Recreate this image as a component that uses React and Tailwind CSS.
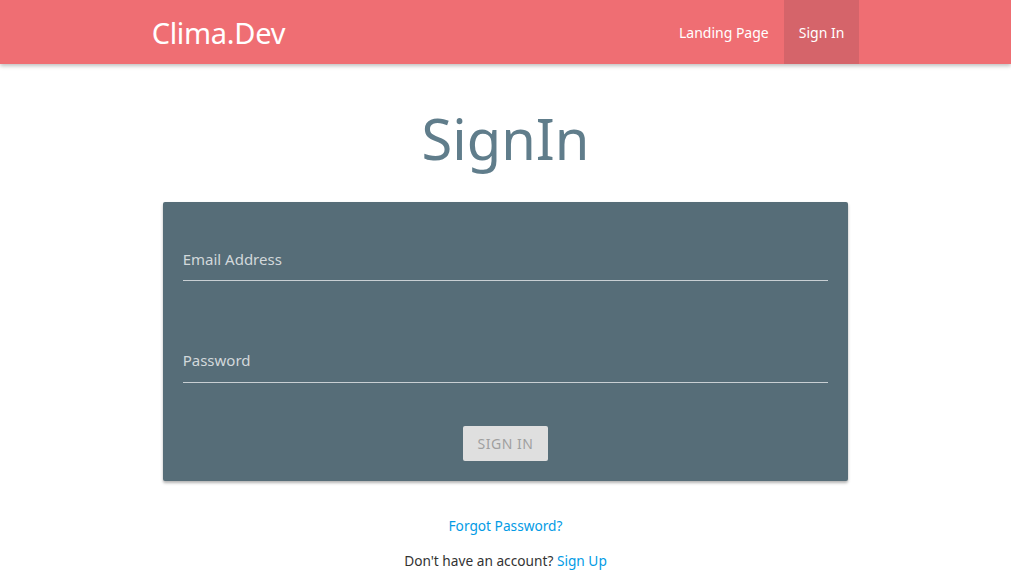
export default function App() {
  return (
    <div className="min-h-screen bg-white" style={{ fontFamily: '"Noto Sans", "Open Sans", sans-serif' }}>
      <nav className="h-16 bg-[#ef6e73] shadow-[0_2px_4px_rgba(0,0,0,0.25)]">
        <div className="mx-auto flex h-full w-[70%] items-center justify-between">
          <a className="text-[29px] leading-none text-white tracking-[-0.3px]">Clima.Dev</a>
          <ul className="flex h-full text-[14px] text-white">
            <li className="flex h-full items-center px-[15px]">Landing Page</li>
            <li className="flex h-full items-center bg-[#d5646a] px-[15px]">Sign In</li>
          </ul>
        </div>
      </nav>

      <main className="mx-auto w-[70%] px-[11px]">
        <h1 className="mt-[34px] text-center text-[56px] leading-[80px] text-[#607d8b]">SignIn</h1>
        <div className="mt-[24px] h-[279px] rounded-[2px] bg-[#566d78] px-[20px] pt-[46px] shadow-[0_2px_3px_rgba(0,0,0,0.3)]">
          <div className="border-b border-[#c8cfd3] pb-[10px] text-[15px] leading-[22px] text-[#d2d8db]">Email Address</div>
          <div className="mt-[68px] border-b border-[#c8cfd3] pb-[11px] text-[15px] leading-[22px] text-[#d2d8db]">Password</div>
          <div className="mt-[43px] flex justify-center">
            <button className="h-[35px] w-[85px] rounded-[2px] bg-[#dfdfdf] text-[14px] tracking-[0.5px] text-[#9f9f9f]">SIGN IN</button>
          </div>
        </div>
        <p className="mt-[35px] text-center text-[13.7px] text-[#039be5]">Forgot Password?</p>
        <p className="mt-[14px] text-center text-[13.7px] text-[#333]">
          Don't have an account? <span className="text-[#039be5]">Sign Up</span>
        </p>
      </main>
    </div>
  );
}
